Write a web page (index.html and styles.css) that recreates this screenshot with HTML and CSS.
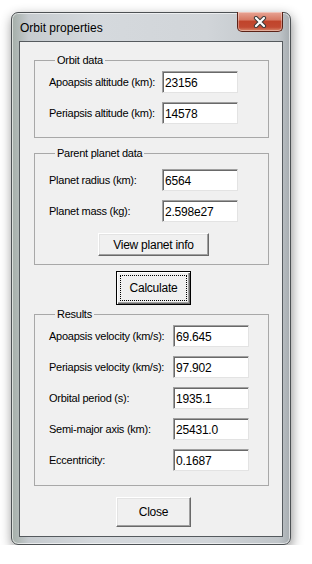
FILE: index.html
```html
<!DOCTYPE html>
<html lang="en">
<head>
  <meta charset="UTF-8" />
  <title>Orbit properties</title>
  <link rel="stylesheet" href="styles.css">
</head>
<body>

<div class="window">
  <div class="titlebar">
    <span class="title">Orbit properties</span>
    <button class="close-x" title="Close">
      <svg width="14" height="12" viewBox="0 0 14 12">
        <path d="M3 2 L11 10 M11 2 L3 10" stroke="#3b3b3b" stroke-width="4.2" stroke-linecap="round" fill="none"/>
        <path d="M3 2 L11 10 M11 2 L3 10" stroke="#ffffff" stroke-width="2.2" stroke-linecap="round" fill="none"/>
      </svg>
    </button>
  </div>

  <div class="client">
    <fieldset class="group group-orbit">
      <legend>Orbit data</legend>
      <div class="row"><label>Apoapsis altitude (km):</label><input type="text" value="23156" /></div>
      <div class="row"><label>Periapsis altitude (km):</label><input type="text" value="14578" /></div>
    </fieldset>

    <fieldset class="group group-planet">
      <legend>Parent planet data</legend>
      <div class="row"><label>Planet radius (km):</label><input type="text" value="6564" /></div>
      <div class="row"><label>Planet mass (kg):</label><input type="text" value="2.598e27" /></div>
      <button class="btn btn-info">View planet info</button>
    </fieldset>

    <button class="btn btn-default btn-calc">Calculate</button>

    <fieldset class="group group-results">
      <legend>Results</legend>
      <div class="row"><label>Apoapsis velocity (km/s):</label><input type="text" value="69.645" /></div>
      <div class="row"><label>Periapsis velocity (km/s):</label><input type="text" value="97.902" /></div>
      <div class="row"><label>Orbital period (s):</label><input type="text" value="1935.1" /></div>
      <div class="row"><label>Semi-major axis (km):</label><input type="text" value="25431.0" /></div>
      <div class="row"><label>Eccentricity:</label><input type="text" value="0.1687" /></div>
    </fieldset>

    <button class="btn btn-close">Close</button>
  </div>
</div>

</body>
</html>
```

FILE: styles.css
```css
body {
  margin: 0;
  padding: 13px 0 0 12px;
  background: #fff;
  font-family: 'Liberation Sans', Arial, sans-serif;
  color: #000;
}
.window {
  width: 280px;
  box-sizing: border-box;
  padding: 0 7px 7px;
  border-radius: 7px;
  border: 1px solid #4d5154;
  margin: -1px 0 0 -1px;
  background: linear-gradient(90deg, #a4aea8 0%, #c6cbcf 6%, #d5d9dd 30%, #d1d5d9 70%, #c0c5c9 96%, #a6acb0 100%);
  box-shadow: 1px 4px 12px rgba(0,0,0,0.45), inset 0 0 0 1px rgba(255,255,255,0.6);
}
.titlebar {
  height: 28px;
  display: flex;
  justify-content: space-between;
  align-items: flex-start;
}
.title {
  font-size: 12px;
  line-height: 15px;
  margin: 8px 0 0 1px;
  color: #000;
}
.close-x {
  width: 46px;
  height: 20px;
  margin-top: -1px;
  padding: 0;
  border: 1px solid #5b2217;
  border-top: none;
  border-radius: 0 0 5px 5px;
  background: linear-gradient(180deg, #e8a595 0%, #d77a65 40%, #c0442b 50%, #c24a32 80%, #d98a6e 100%);
  box-shadow: inset 0 0 0 1px rgba(255,255,255,0.35);
  display: flex;
  align-items: center;
  justify-content: center;
}
.client {
  border: 1px solid #555a5e;
  background: #f0f0f0;
  padding: 12px 0 9px 14px;
  font-size: 11px;
  letter-spacing: -0.25px;
}
.group {
  width: 235px;
  box-sizing: border-box;
  margin: 0;
  border: 1px solid #a8a8a8;
  padding: 4px 0 13px 14px;
  display: flex;
  flex-direction: column;
  gap: 9px;
}
.group legend {
  line-height: 13px;
  padding: 0 2px;
  margin-left: 6px;
}
.group-planet {
  margin-top: 9px;
  padding-top: 9px;
  padding-bottom: 8px;
}
.group-results {
  margin-top: 3px;
  padding-bottom: 14px;
}
.row {
  display: flex;
  align-items: center;
  height: 22px;
}
.row label {
  width: 113px;
  flex: none;
}
.group-results .row label {
  width: 124px;
}
.row input {
  width: 76px;
  height: 22px;
  box-sizing: border-box;
  margin: 0;
  padding: 2px 2px 0;
  font: inherit;
  font-size: 12px;
  letter-spacing: -0.2px;
  line-height: 14px;
  background: #fff;
  border: 1px solid;
  border-color: #a0a0a0 #e3e3e3 #e3e3e3 #a0a0a0;
  box-shadow: inset 1px 1px 0 #696969;
  outline: none;
}
.btn {
  display: block;
  margin: 0;
  padding: 0;
  font: inherit;
  letter-spacing: inherit;
  color: #000;
  background: #f0f0f0;
  border: 1px solid;
  border-color: #fff #696969 #696969 #fff;
  box-shadow: inset -1px -1px 0 #a0a0a0, inset 1px 1px 0 #e3e3e3;
  cursor: pointer;
  font-size: 12px;
}
.btn-info {
  width: 111px;
  height: 23px;
  margin: 2px 0 0 49px;
}
.btn-default {
  border: 1px solid #000;
  box-shadow: inset 1px 1px 0 #fff, inset -1px -1px 0 #696969, inset -2px -2px 0 #a0a0a0;
  outline: 1px dotted #000;
  outline-offset: -5px;
}
.btn-calc {
  width: 75px;
  height: 34px;
  margin: 6px 0 0 82px;
}
.btn-close {
  width: 75px;
  height: 30px;
  margin: 11px 0 0 82px;
}
```
